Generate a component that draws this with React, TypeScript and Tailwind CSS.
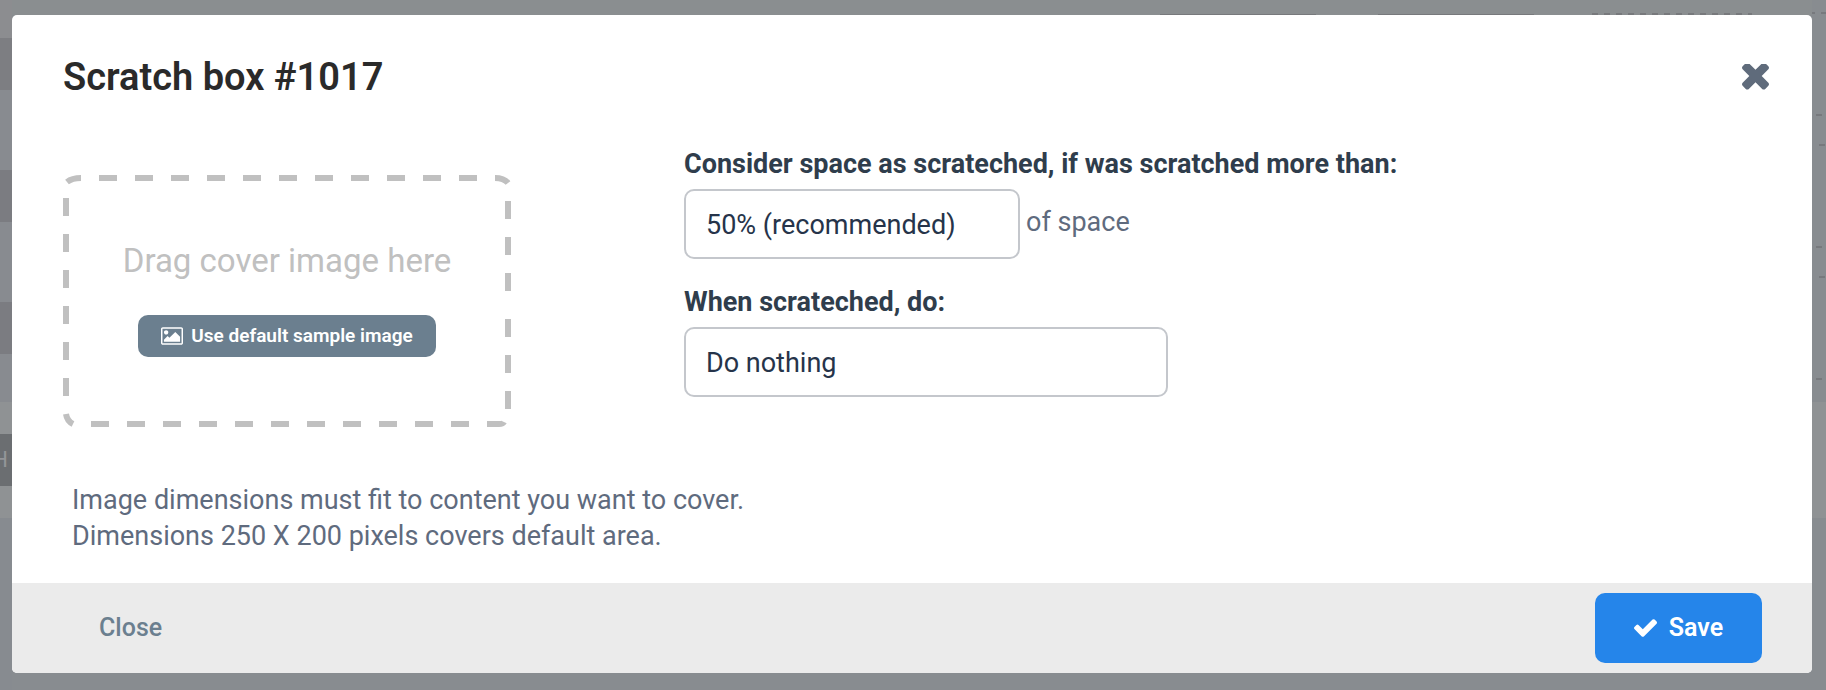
import { ReactNode } from "react";

const LEFT_BANDS = [
  "h-[38px] bg-[#8c8d90]",
  "h-[52px] bg-[#7d7e82]",
  "h-[80px] bg-[#888b90]",
  "h-[52px] bg-[#7b7c81]",
  "h-[80px] bg-[#888b90]",
  "h-[52px] bg-[#7b7c81]",
  "h-[48px] bg-[#888b90]",
  "h-[32px] bg-[#8f9294]",
  "h-[52px] bg-[#6b6e71]",
  "h-[32px] bg-[#8f9294]",
  "flex-1 bg-[#878b90]",
];

function TimesIcon() {
  return (
    <svg viewBox="302 430 1188 1188" className="w-[27px] h-[27px]" fill="currentColor" aria-hidden="true">
      <path d="M1490 1322q0 40-28 68l-136 136q-28 28-68 28t-68-28l-294-294-294 294q-28 28-68 28t-68-28l-136-136q-28-28-28-68t28-68l294-294-294-294q-28-28-28-68t28-68l136-136q28-28 68-28t68 28l294 294 294-294q28-28 68-28t68 28l136 136q28 28 28 68t-28 68l-294 294 294 294q28 28 28 68z" />
    </svg>
  );
}

function CheckIcon() {
  return (
    <svg viewBox="121 334 1550 1188" className="w-[23px] h-[18px]" fill="currentColor" aria-hidden="true">
      <path d="M1671 566q0 40-28 68l-724 724-136 136q-28 28-68 28t-68-28l-136-136-362-362q-28-28-28-68t28-68l136-136q28-28 68-28t68 28l294 295 656-657q28-28 68-28t68 28l136 136q28 28 28 68z" />
    </svg>
  );
}

function PictureIcon() {
  return (
    <svg viewBox="64 128 1920 1536" className="w-[22px] h-[18px]" fill="currentColor" aria-hidden="true">
      <path d="M704 576q0 80-56 136t-136 56-136-56-56-136 56-136 136-56 136 56 56 136zm1024 384v448h-1408v-192l320-320 160 160 512-512zm96-704h-1600q-13 0-22.5 9.5t-9.5 22.5v1216q0 13 9.5 22.5t22.5 9.5h1600q13 0 22.5-9.5t9.5-22.5v-1216q0-13-9.5-22.5t-22.5-9.5zm160 32v1216q0 66-47 113t-113 47h-1600q-66 0-113-47t-47-113v-1216q0-66 47-113t113-47h1600q66 0 113 47t47 113z" />
    </svg>
  );
}

// Dashed outline of the drop area
function DashedFrame() {
  return (
    <svg viewBox="0 0 448 252" className="absolute inset-0 w-full h-full" fill="none" stroke="#c0c0c0" strokeWidth="6" aria-hidden="true">
      <path d="M36 3H432" strokeDasharray="18 18" />
      <path d="M3 23V238" strokeDasharray="18 18" />
      <path d="M28 249H424" strokeDasharray="18 18" />
      <path d="M445 26V117M445 144V235" strokeDasharray="18 18" />
      <path d="M4 7Q9 3 18 3M432 3Q441 3 445 8M3 239Q4 246 10 249M424 249H436Q440 249 441 247" />
    </svg>
  );
}

function Field({ id, label, children }: { id: string; label: string; children: ReactNode }) {
  return (
    <div>
      <label htmlFor={id} className="block pt-px mb-[7px] text-[27px] leading-9 font-bold text-[#2f3d4c]">
        {label}
      </label>
      {children}
    </div>
  );
}

export default function App() {
  return (
    <div className="flex min-h-screen bg-[#888c90] font-[Roboto,sans-serif] text-[27px] leading-9 text-[#5f6b7e]">
      <div className="flex w-3 shrink-0 flex-col overflow-hidden" aria-hidden="true">
        {LEFT_BANDS.map((band, index) => (
          <div key={index} className={`flex shrink-0 items-center justify-end pr-1 ${band}`}>
            {index === 8 && <span className="text-[22px] text-[#939598]">H</span>}
          </div>
        ))}
      </div>

      <div className="min-w-0 flex-1">
        <div className="flex h-[15px] items-end justify-end bg-[#8a8e90]" aria-hidden="true">
          <svg width="664" height="3" fill="none" stroke="#77797c">
            <path d="M12 2.5H168M230 2.5H386" />
            <path d="M444 2H604" strokeWidth="2" strokeDasharray="6 6" />
          </svg>
        </div>

        <div role="dialog" aria-labelledby="dialog-title" className="overflow-hidden rounded-[5px] bg-white">
          <div className="flex items-center justify-between pt-[38px] pr-[43px] pl-[51px]">
            <h2 id="dialog-title" className="text-[38px] leading-12 font-semibold text-[#2a2a2a]">
              Scratch box #1017
            </h2>
            <button type="button" aria-label="Dismiss" className="text-[#5f6b7b]">
              <TimesIcon />
            </button>
          </div>

          <div className="mt-11 flex items-start gap-[173px] px-[51px]">
            <div className="relative mt-[30px] flex h-[252px] w-[448px] shrink-0 flex-col items-center pt-[62px]">
              <DashedFrame />
              <p className="text-[33px] leading-12 text-[#c0c0c0]">Drag cover image here</p>
              <button type="button" className="relative mt-[30px] flex h-[42px] w-[298px] items-center justify-center gap-2 rounded-[10px] bg-[#6b7f8f] text-[19px] font-semibold text-white">
                <PictureIcon />
                Use default sample image
              </button>
            </div>

            <div className="flex flex-col gap-6">
              <Field id="threshold" label="Consider space as scrateched, if was scratched more than:">
                <div className="flex items-start gap-[6px]">
                  <select id="threshold" className="h-[70px] w-[336px] appearance-none rounded-[10px] border-2 border-[#c4c7cc] bg-white px-5 pt-[2px] text-[#26344a]">
                    <option>50% (recommended)</option>
                  </select>
                  <span className="pt-[15px]">of space</span>
                </div>
              </Field>
              <Field id="action" label="When scrateched, do:">
                <select id="action" className="h-[70px] w-[484px] appearance-none rounded-[10px] border-2 border-[#c4c7cc] bg-white px-5 pt-[2px] text-[#26344a]">
                  <option>Do nothing</option>
                </select>
              </Field>
            </div>
          </div>

          <p className="mt-[55px] px-[60px] pb-[29px]">
            Image dimensions must fit to content you want to cover.
            <br />
            Dimensions 250 X 200 pixels covers default area.
          </p>

          <div className="flex items-center justify-between bg-[#ebebeb] py-[10px] pr-[50px] pl-[51px]">
            <button type="button" className="h-[70px] px-9 text-[25px] font-medium text-[#6b7f8f]">
              Close
            </button>
            <button type="button" className="flex h-[70px] w-[167px] items-center justify-center gap-3 rounded-[10px] bg-[#2585ea] text-[25px] font-semibold text-white">
              <CheckIcon />
              Save
            </button>
          </div>
        </div>
      </div>

      <div className="flex w-[14px] shrink-0 flex-col bg-[#888c90]" aria-hidden="true">
        <svg width="14" height="402" stroke="#77797d" strokeWidth="2">
          <path d="M0 13H3M9 13H14M4 115H10M7 145H13M4 247H10M7 277H13M4 379H10" />
        </svg>
        <div className="h-[116px] bg-[#8f9294]" />
      </div>
    </div>
  );
}
